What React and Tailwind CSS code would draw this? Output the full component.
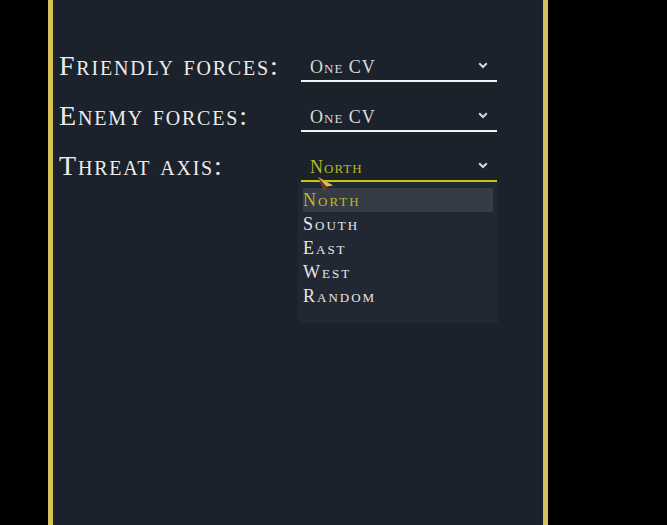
import { useState } from 'react';

const serif = { fontFamily: '"Liberation Serif", "DejaVu Serif", serif', fontVariant: 'small-caps' };

const Chevron = () => (
  <svg width="10" height="7" viewBox="0 0 10 7" className="mb-[11px] shrink-0">
    <path d="M1.2 1.2 L5 5 L8.8 1.2" fill="none" stroke="#d9d9d9" strokeWidth="2" />
  </svg>
);

const Pointer = () => (
  <svg width="18" height="17" viewBox="0 0 18 17" className="pointer-events-none absolute left-[16px] top-[26px] z-20">
    <path d="M1 1 L16 9.5 L9.5 10.5 L7.5 15.5 Z" fill="#8a5a24" />
    <path d="M1 1 L16 9.5 L9.5 10.5 Z" fill="#e2b860" />
    <path d="M1 1 L9.5 10.5 L7.5 15.5 Z" fill="#6b4218" />
  </svg>
);

const Select = ({ value, open, options, active }) => (
  <div className="relative">
    <div
      className={`flex h-[32px] w-[196px] items-end justify-between border-b-2 pl-[9px] pr-[9px] ${
        open ? 'border-[#c8c80a]' : 'border-[#f2f2f2]'
      }`}
    >
      <span
        className={`pb-[3px] text-[18px] leading-[20px] tracking-[1px] ${open ? 'text-[#b9b920]' : 'text-[#dcdcdc]'}`}
      >
        {value}
      </span>
      <Chevron />
    </div>
    {open && (
      <>
        <Pointer />
        <div className="absolute left-[-3px] top-full z-10 w-[200px] bg-[#222833] pb-[15px] pl-[5px] pr-[5px] pt-[6px]">
          {options.map((o) => (
            <div
              key={o}
              className={`h-[24px] text-[18px] leading-[24px] tracking-[2px] ${
                o === active ? 'bg-[#363c46] text-[#b9b920]' : 'text-[#e6e6e6]'
              }`}
            >
              {o}
            </div>
          ))}
        </div>
      </>
    )}
  </div>
);

export default function App() {
  const [rows] = useState([
    { label: 'Friendly forces:', value: 'One CV' },
    { label: 'Enemy forces:', value: 'One CV' },
    { label: 'Threat axis:', value: 'North', open: true },
  ]);

  return (
    <div className="flex h-[525px] w-full overflow-hidden bg-black" style={serif}>
      <div className="ml-[48px] h-full w-[500px] border-x-[5px] border-[#d6c157] bg-[#1c222b] pl-[6px] pt-[32px]">
        {rows.map((r) => (
          <div key={r.label} className="flex h-[50px] items-end">
            <div className="w-[242px] whitespace-nowrap text-[28px] leading-[32px] tracking-[1.8px] text-[#ececec]">
              {r.label}
            </div>
            <Select
              value={r.value}
              open={r.open}
              options={['North', 'South', 'East', 'West', 'Random']}
              active="North"
            />
          </div>
        ))}
      </div>
    </div>
  );
}
